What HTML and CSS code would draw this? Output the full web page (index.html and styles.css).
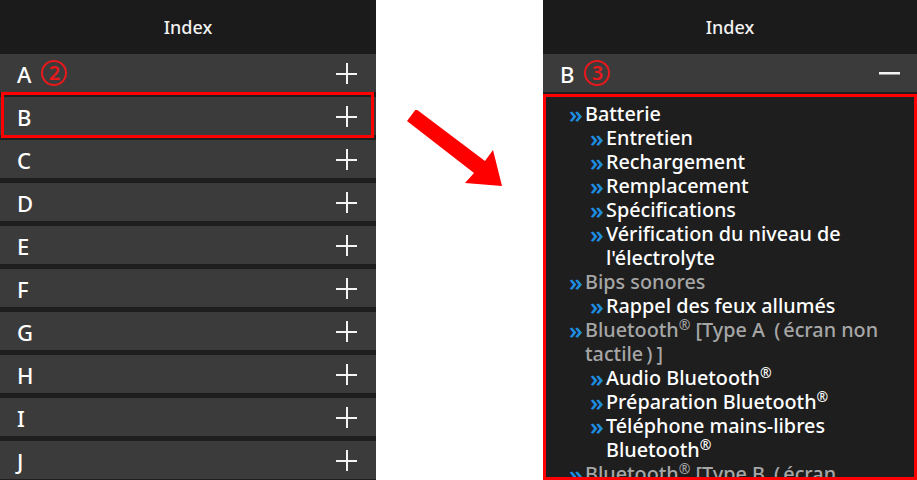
FILE: index.html
```html
<!DOCTYPE html>
<html lang="fr">
<head>
<meta charset="utf-8">
<link rel="stylesheet" href="styles.css">
</head>
<body>
<div class="page">
  <section class="panel panel-left">
    <header class="head">Index</header>
    <div class="rows">
      <div class="row"><span class="letter">A</span><span class="badge">2</span><span class="plus"></span></div>
      <div class="row row-selected"><span class="letter">B</span><span class="plus"></span></div>
      <div class="row"><span class="letter">C</span><span class="plus"></span></div>
      <div class="row"><span class="letter">D</span><span class="plus"></span></div>
      <div class="row"><span class="letter">E</span><span class="plus"></span></div>
      <div class="row"><span class="letter">F</span><span class="plus"></span></div>
      <div class="row"><span class="letter">G</span><span class="plus"></span></div>
      <div class="row"><span class="letter">H</span><span class="plus"></span></div>
      <div class="row"><span class="letter">I</span><span class="plus"></span></div>
      <div class="row"><span class="letter">J</span><span class="plus"></span></div>
    </div>
  </section>

  <div class="middle">
    <svg class="arrow" width="110" height="80" viewBox="0 0 110 80">
      <polygon points="0,17 9,5 78,57 86,46 95,82 58,79 67,69" transform="translate(6,-6)" fill="#ff0000"/>
    </svg>
  </div>

  <section class="panel panel-right">
    <header class="head">Index</header>
    <div class="row row-open"><span class="letter">B</span><span class="badge">3</span><span class="minus"></span></div>
    <div class="list">
      <div class="item l1"><span class="chev">»</span><span class="txt">Batterie</span></div>
      <div class="item l2"><span class="chev">»</span><span class="txt">Entretien</span></div>
      <div class="item l2"><span class="chev">»</span><span class="txt">Rechargement</span></div>
      <div class="item l2"><span class="chev">»</span><span class="txt">Remplacement</span></div>
      <div class="item l2"><span class="chev">»</span><span class="txt">Spécifications</span></div>
      <div class="item l2"><span class="chev">»</span><span class="txt">Vérification du niveau de l'électrolyte</span></div>
      <div class="item l1 dim"><span class="chev">»</span><span class="txt">Bips sonores</span></div>
      <div class="item l2"><span class="chev">»</span><span class="txt">Rappel des feux allumés</span></div>
      <div class="item l1 dim"><span class="chev">»</span><span class="txt">Bluetooth<sup>®</sup> [Type A <span class="par-open">(</span>écran non tactile<span class="par-close">)</span>]</span></div>
      <div class="item l2"><span class="chev">»</span><span class="txt">Audio Bluetooth<sup>®</sup></span></div>
      <div class="item l2"><span class="chev">»</span><span class="txt">Préparation Bluetooth<sup>®</sup></span></div>
      <div class="item l2"><span class="chev">»</span><span class="txt">Téléphone mains-libres Bluetooth<sup>®</sup></span></div>
      <div class="item l1 dim"><span class="chev">»</span><span class="txt">Bluetooth<sup>®</sup> [Type B <span class="par-open">(</span>écran tactile<span class="par-close">)</span>]</span></div>
    </div>
  </section>
</div>
</body>
</html>
```

FILE: styles.css
```css
html, body {
  margin: 0;
  padding: 0;
  background: #ffffff;
}

.page {
  display: flex;
  width: 917px;
  height: 480px;
  overflow: hidden;
  font-family: "Noto Sans", "Open Sans", sans-serif;
}

.panel {
  background: #1e1e1e;
  height: 480px;
  overflow: hidden;
  display: flex;
  flex-direction: column;
}

.panel-left {
  width: 376px;
}

.panel-right {
  width: 374px;
}

.middle {
  width: 167px;
  display: flex;
  justify-content: flex-start;
}

.arrow {
  margin-top: 110px;
  margin-left: 25px;
}

.head {
  height: 54px;
  flex: none;
  background: #1b1b1b;
  color: #f2f2f2;
  font-size: 18px;
  font-weight: 500;
  display: flex;
  align-items: center;
  justify-content: center;
  padding-bottom: 1px;
  box-sizing: border-box;
}

.rows {
  display: flex;
  flex-direction: column;
  gap: 5px;
}

.row {
  height: 38px;
  flex: none;
  background: #3b3b3b;
  display: flex;
  align-items: center;
  padding: 0 19px 0 17px;
  position: relative;
  color: #ffffff;
}

.row-selected::after {
  content: "";
  position: absolute;
  left: 1px;
  right: 2px;
  top: -5px;
  bottom: -3px;
  border: 3px solid #ff0000;
}

.letter {
  font-size: 22px;
  font-weight: 500;
  line-height: 1;
  margin-top: 1px;
}

.badge {
  width: 22px;
  height: 22px;
  border: 2px solid #e8191c;
  border-radius: 50%;
  color: #e8191c;
  font-size: 20px;
  font-weight: 600;
  line-height: 22px;
  text-align: center;
  margin-left: 10px;
  box-sizing: content-box;
}

.plus {
  margin-left: auto;
  width: 21px;
  height: 21px;
  position: relative;
}

.plus::before,
.plus::after {
  content: "";
  position: absolute;
  background: #f4f4f4;
}

.plus::before {
  left: 0;
  right: 0;
  top: 10px;
  height: 2px;
}

.plus::after {
  top: 0;
  bottom: 0;
  left: 10px;
  width: 2px;
}

.row-open {
  padding-right: 17px;
}

.minus {
  margin-left: auto;
  width: 21px;
  height: 2px;
  background: #f4f4f4;
  border-bottom: 1px solid #9a9a9a;
}

.list {
  margin-top: 2px;
  flex: 1;
  border: 3px solid #ff0000;
  overflow: hidden;
  padding: 5px 18px 0 24px;
  display: flex;
  flex-direction: column;
}

.item {
  display: flex;
  font-size: 19.8px;
  font-weight: 500;
  line-height: 24px;
  color: #ffffff;
}

.item.l2 {
  padding-left: 21px;
}

.item.dim {
  color: #a6a6a6;
}

.chev {
  flex: none;
  width: 15px;
  color: #1e8ee0;
  font-size: 24px;
  font-weight: 600;
  line-height: 24px;
  margin-left: -1px;
  margin-right: 1px;
}

.par-open {
  margin: 0 3px 0 4px;
}

.par-close {
  margin: 0 4px 0 3px;
}

.txt sup {
  font-size: 14px;
  line-height: 0;
  vertical-align: 7px;
}
```
